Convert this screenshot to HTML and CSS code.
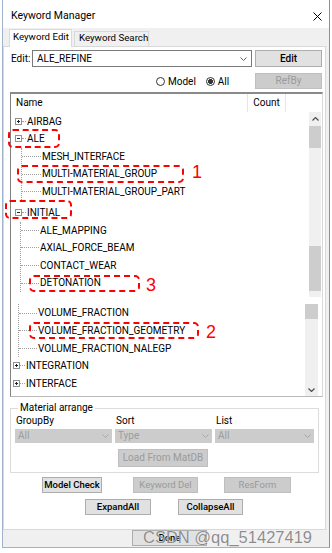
FILE: index.html
```html
<!DOCTYPE html>
<html>
<head>
<meta charset="utf-8">
<link rel="stylesheet" href="styles.css">
</head>
<body>
<div class="window">
  <div class="titlebar">
    <span class="title">Keyword Manager</span>
    <svg class="close" width="9" height="9" viewBox="0 0 9 9"><path d="M.5 .5L8.5 8.5M8.5 .5L.5 8.5" stroke="#000" stroke-width="1"/></svg>
  </div>
  <div class="tabstrip">
    <div class="tab active">Keyword Edit</div>
    <div class="tab">Keyword Search</div>
  </div>
  <div class="panel">
    <div class="edit-row">
      <span class="lbl">Edit:</span>
      <div class="combo">
        <span class="ctext">ALE_REFINE</span>
        <svg width="7" height="4" viewBox="0 0 7 4"><path d="M.5 .5L3.5 3.5L6.5 .5" fill="none" stroke="#606060"/></svg>
      </div>
      <button class="btn edit">Edit</button>
    </div>
    <div class="radio-row">
      <span class="radio"></span><span class="rlabel">Model</span>
      <span class="radio on second"></span><span class="rlabel">All</span>
      <button class="btn dis refby">RefBy</button>
    </div>
    <div class="tree">
      <div class="thead">
        <div class="th name">Name</div>
        <div class="th count">Count</div>
      </div>
      <div class="tbody">
        <div class="rows">
          <div class="row root"><svg class="exp" width="7" height="7" viewBox="0 0 7 7"><rect x=".5" y=".5" width="6" height="6" fill="#fff" stroke="#919191"/><path d="M2 3.5h3M3.5 2v3" stroke="#222"/></svg><span class="hl"></span><span class="t">AIRBAG</span></div>
          <div class="row root"><svg class="exp" width="7" height="7" viewBox="0 0 7 7"><rect x=".5" y=".5" width="6" height="6" fill="#fff" stroke="#919191"/><path d="M2 3.5h3" stroke="#222"/></svg><span class="hl"></span><span class="t">ALE</span></div>
          <div class="kids ka">
            <div class="row kid"><span class="hl"></span><span class="t">MESH_INTERFACE</span></div>
            <div class="row kid"><span class="hl"></span><span class="t">MULTI-MATERIAL_GROUP</span></div>
            <div class="row kid"><span class="hl"></span><span class="t">MULTI-MATERIAL_GROUP_PART</span></div>
          </div>
          <div class="gap1"></div>
          <div class="row root"><svg class="exp" width="7" height="7" viewBox="0 0 7 7"><rect x=".5" y=".5" width="6" height="6" fill="#fff" stroke="#919191"/><path d="M2 3.5h3" stroke="#222"/></svg><span class="hl"></span><span class="t">INITIAL</span></div>
          <div class="kids kb">
            <div class="row kid"><span class="hl"></span><span class="t">ALE_MAPPING</span></div>
            <div class="row kid"><span class="hl"></span><span class="t">AXIAL_FORCE_BEAM</span></div>
            <div class="row kid"><span class="hl"></span><span class="t">CONTACT_WEAR</span></div>
            <div class="row kid"><span class="hl"></span><span class="t">DETONATION</span></div>
          </div>
          <div class="gap2"></div>
          <div class="kids kc">
            <div class="row kid"><span class="hl"></span><span class="t">VOLUME_FRACTION</span></div>
            <div class="row kid"><span class="hl"></span><span class="t">VOLUME_FRACTION_GEOMETRY</span></div>
            <div class="row kid"><span class="hl"></span><span class="t">VOLUME_FRACTION_NALEGP</span></div>
          </div>
          <div class="row root lo"><svg class="exp" width="7" height="7" viewBox="0 0 7 7"><rect x=".5" y=".5" width="6" height="6" fill="#fff" stroke="#919191"/><path d="M2 3.5h3M3.5 2v3" stroke="#222"/></svg><span class="hl"></span><span class="t">INTEGRATION</span></div>
          <div class="row root lo"><svg class="exp" width="7" height="7" viewBox="0 0 7 7"><rect x=".5" y=".5" width="6" height="6" fill="#fff" stroke="#919191"/><path d="M2 3.5h3M3.5 2v3" stroke="#222"/></svg><span class="hl"></span><span class="t">INTERFACE</span></div>
        </div>
        <div class="vscroll">
          <div class="sb-arrow up"><svg width="7" height="4" viewBox="0 0 7 4"><path d="M.5 3.5L3.5 .5L6.5 3.5" fill="none" stroke="#505050" stroke-width="1.2"/></svg></div>
          <div class="sb-thumb t1"></div>
          <div class="sb-track k1"></div>
          <div class="sb-thumb t2"></div>
          <div class="sb-track k2"></div>
          <div class="sb-gap"></div>
          <div class="sb-thumb t3 low"></div>
          <div class="sb-track k3 low"></div>
          <div class="sb-arrow down low"><svg width="7" height="4" viewBox="0 0 7 4"><path d="M.5 .5L3.5 3.5L6.5 .5" fill="none" stroke="#505050" stroke-width="1.2"/></svg></div>
        </div>
      </div>
    </div>
    <fieldset class="group">
      <legend>Material arrange</legend>
      <div class="ggrid labels">
        <span>GroupBy</span><span>Sort</span><span>List</span>
      </div>
      <div class="ggrid combos">
        <div class="dcombo"><span>All</span><svg width="7" height="4" viewBox="0 0 7 4"><path d="M.5 .5L3.5 3.5L6.5 .5" fill="none" stroke="#a8a8a8"/></svg></div>
        <div class="dcombo"><span>Type</span><svg width="7" height="4" viewBox="0 0 7 4"><path d="M.5 .5L3.5 3.5L6.5 .5" fill="none" stroke="#a8a8a8"/></svg></div>
        <div class="dcombo"><span>All</span><svg width="7" height="4" viewBox="0 0 7 4"><path d="M.5 .5L3.5 3.5L6.5 .5" fill="none" stroke="#a8a8a8"/></svg></div>
      </div>
      <button class="btn dis load">Load From MatDB</button>
    </fieldset>
    <div class="brow r1">
      <button class="btn b-check">Model Check</button>
      <button class="btn dis b-del">Keyword Del</button>
      <button class="btn dis b-res">ResForm</button>
    </div>
    <div class="brow r2">
      <button class="btn b-exp">ExpandAll</button>
      <button class="btn b-col">CollapseAll</button>
    </div>
  </div>
  <div class="footer">
    <button class="btn done">Done</button>
  </div>
</div>

<div class="mark m1"></div>
<div class="mark m2"></div>
<div class="mark m3"></div>
<div class="mark m4"></div>
<div class="mark m5"></div>
<span class="num n1">1</span>
<span class="num n2">2</span>
<span class="num n3">3</span>
<span class="wm">CSDN @qq_51427419</span>
</body>
</html>
```

FILE: styles.css
```css
* { box-sizing: border-box; }
html, body { margin: 0; padding: 0; }
body {
  width: 332px;
  height: 553px;
  background: #fff;
  font-family: Roboto, "Liberation Sans", sans-serif;
  font-size: 10px;
  color: #000;
  position: relative;
  overflow: hidden;
}

.window {
  margin-left: 2px;
  width: 328px;
  height: 548px;
  border-left: 1px solid #9fb3cc;
  border-right: 1px solid #5a9be0;
  border-bottom: 1px solid #8fb6e6;
  background: #f0f0f0;
  display: flex;
  flex-direction: column;
}

.titlebar {
  height: 28px;
  flex: none;
  background: #fff;
  display: flex;
  align-items: center;
  padding: 4px 7px 0 8px;
}
.title { flex: 1; font-size: 10.5px; line-height: 12px; }
.close { display: block; }

.tabstrip {
  height: 18px;
  flex: none;
  display: flex;
  align-items: flex-end;
  padding-left: 6px;
}
.tab {
  font-size: 9.7px;
  line-height: 12px;
  height: 15px;
  border: 1px solid #d9d9d9;
  border-bottom: none;
  background: #f0f0f0;
  width: 75px;
  margin-left: 2px;
  padding-left: 4px;
  white-space: nowrap;
}
.tab.active {
  width: 63px;
  height: 18px;
  margin-left: 0;
  margin-bottom: -1px;
  padding-left: 3px;
  line-height: 14px;
  background: #fff;
  position: relative;
  z-index: 1;
}

.panel {
  width: 323px;
  height: 484px;
  flex: none;
  border: 1px solid #d9d9d9;
  background: #fff;
}

.btn {
  font-family: Roboto, "Liberation Sans", sans-serif;
  font-size: 9.5px;
  font-weight: 500;
  line-height: 12px;
  color: #000;
  background: #e1e1e1;
  border: 1px solid #adadad;
  padding: 0;
  margin: 0;
  display: flex;
  align-items: center;
  justify-content: center;
  white-space: nowrap;
  flex: none;
}
.btn.dis {
  background: #cccccc;
  border-color: #bfbfbf;
  color: #9a9a9a;
  font-weight: 400;
}

.edit-row {
  display: flex;
  align-items: center;
  margin-top: 3px;
  height: 17px;
  padding-left: 7px;
}
.lbl { width: 21px; flex: none; }
.combo {
  width: 220px;
  height: 17px;
  border: 1px solid #7a7a7a;
  display: flex;
  align-items: center;
  justify-content: space-between;
  padding: 0 4px 0 4px;
  flex: none;
}
.combo svg { display: block; }
.btn.edit { margin-left: 3px; width: 67px; height: 17px; font-size: 10px; }

.radio-row {
  display: flex;
  align-items: center;
  margin-top: 6px;
  height: 16px;
  padding-left: 152px;
}
.radio {
  width: 9px;
  height: 9px;
  border: 1px solid #333;
  border-radius: 50%;
  background: #fff;
  flex: none;
}
.radio.on { background: radial-gradient(circle, #333 0 2.2px, #fff 2.7px); }
.radio.second { margin-left: 10px; }
.rlabel { margin-left: 3px; }
.btn.refby { margin-left: auto; margin-right: 3px; width: 67px; height: 16px; font-size: 10px; }

.tree {
  margin-top: 3px;
  margin-left: 6px;
  width: 313px;
  height: 305px;
  border-top: 2px solid #8a8a8a;
  border-left: 1px solid #828282;
  border-right: 1px solid #d9d9d9;
  border-bottom: 1px solid #b9b9b9;
  display: flex;
  flex-direction: column;
  overflow: hidden;
}
.thead { height: 18px; flex: none; display: flex; }
.th { height: 18px; line-height: 18px; border-right: 1px solid #e5e5e5; }
.th.name { width: 237px; padding-left: 5px; }
.th.count { width: 38px; text-align: center; }

.tbody { flex: 1; display: flex; min-height: 0; }
.rows { flex: 1; padding-top: 0.5px; overflow: hidden; }
.row {
  height: 17.6px;
  line-height: 17.6px;
  display: flex;
  align-items: center;
  white-space: nowrap;
}
.root { padding-left: 4px; }
.root.lo { padding-left: 2px; }
.exp { display: block; flex: none; }
.hl { flex: none; height: 0; border-top: 1px dotted #a0a0a0; }
.root .hl { width: 4px; }
.root.lo .hl { width: 5px; }
.t { margin-left: 1px; }

.kids { border-left: 1px dotted #a0a0a0; }
.ka { margin-left: 10px; }
.ka .hl { width: 19px; }
.kb { margin-left: 9px; }
.kb .hl { width: 18px; }
.kc { margin-left: 7px; }
.kc .hl { width: 18px; }
.gap1 { height: 3.5px; }
.gap2 { height: 12.4px; }

.vscroll {
  width: 12px;
  margin-right: 1px;
  flex: none;
  display: flex;
  flex-direction: column;
}
.sb-arrow {
  background: #f0f0f0;
  display: flex;
  align-items: center;
  justify-content: center;
  flex: none;
}
.sb-arrow svg { display: block; }
.sb-arrow.up { height: 14px; }
.sb-arrow.down { height: 13px; }
.sb-thumb { background: #cdcdcd; flex: none; }
.sb-track { background: #f0f0f0; flex: none; }
.t1 { height: 22px; }
.k1 { height: 97.5px; }
.t2 { height: 45.5px; }
.k2 { height: 6px; }
.sb-gap { height: 7px; flex: none; }
.t3 { height: 15px; }
.k3 { height: 64px; }
.low { width: 13px; margin-left: -4px; }

.group {
  margin: 5px 0 0 6px;
  width: 309px;
  height: 71px;
  border: 1px solid #dcdcdc;
  padding: 0 4px;
  min-width: 0;
}
.group legend {
  margin-left: 3px;
  padding: 0 2px;
  font-size: 10px;
  line-height: 12px;
}
.ggrid {
  display: grid;
  grid-template-columns: 97px 97px 99px;
  column-gap: 3px;
}
.labels { height: 12px; line-height: 12px; margin-top: 1px; }
.labels span { padding-left: 1px; }
.combos { margin-top: 2px; }
.dcombo {
  height: 14px;
  background: #cccccc;
  color: #9d9d9d;
  display: flex;
  align-items: center;
  justify-content: space-between;
  padding: 0 3px;
  line-height: 12px;
}
.dcombo svg { display: block; }
.btn.load { margin: 6px 0 0 103px; width: 90px; height: 18px; font-size: 10px; }

.brow { display: flex; height: 16px; }
.r1 { margin-top: 4px; }
.r2 { margin-top: 6px; }
.brow .btn { height: 16px; }
.b-check { margin-left: 38px; width: 60px; }
.b-del { margin-left: 31px; width: 65px; }
.b-res { margin-left: 26px; width: 67px; }
.b-exp { margin-left: 81px; width: 66px; }
.b-col { margin-left: 27px; width: 65px; }

.footer { height: 17px; flex: none; }
.btn.done { margin-left: 129px; width: 75px; height: 16px; }

.mark {
  position: absolute;
  border: 2px dashed #ff0000;
  border-radius: 5px;
}
.m1 { left: 8px; top: 129px; width: 52px; height: 19px; }
.m2 { left: 17px; top: 165px; width: 167px; height: 18px; }
.m3 { left: 5px; top: 200px; width: 67px; height: 19px; }
.m4 { left: 29px; top: 275px; width: 111px; height: 17px; }
.m5 { left: 29px; top: 322px; width: 170px; height: 17px; }

.num {
  position: absolute;
  color: #ff0000;
  font-family: "Liberation Sans", Arial, sans-serif;
  font-size: 18px;
  line-height: 18px;
}
.n1 { left: 192px; top: 162.5px; }
.n2 { left: 206px; top: 322.5px; }
.n3 { left: 146px; top: 275.5px; }

.wm {
  position: absolute;
  left: 143px;
  top: 528px;
  font-family: "Liberation Sans", Arial, sans-serif;
  font-size: 16.5px;
  line-height: 18px;
  color: rgba(120, 120, 120, 0.85);
  text-shadow: 0 0 1px #fff;
  white-space: nowrap;
}
```
